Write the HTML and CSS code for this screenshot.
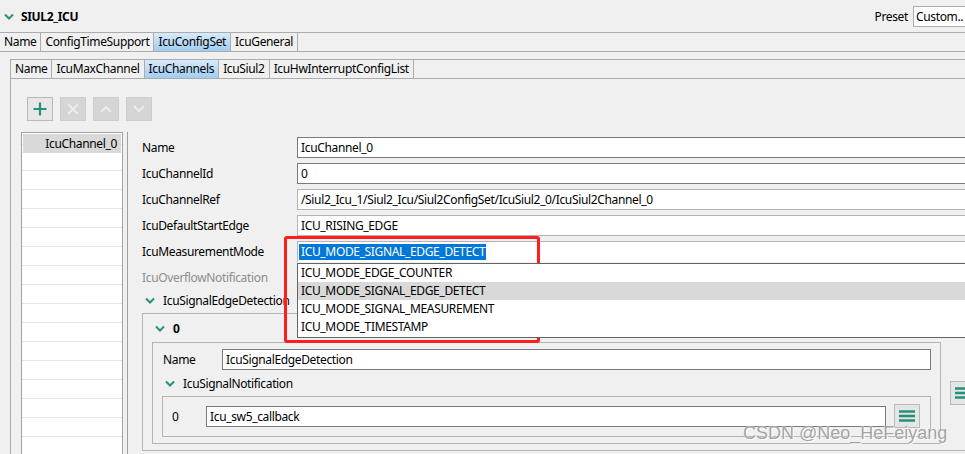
FILE: index.html
```html
<!DOCTYPE html>
<html>
<head>
<meta charset="utf-8">
<link rel="stylesheet" href="styles.css">
</head>
<body>
<div class="app">
  <div class="topbar">
    <svg class="chev" width="10" height="7" viewBox="0 0 10 7"><polyline points="1,1.5 5,5.5 9,1.5"/></svg>
    <span class="title">SIUL2_ICU</span>
    <span class="spacer"></span>
    <span class="preset-label">Preset</span>
    <span class="preset-box">Custom..</span>
  </div>
  <div class="wide">
    <div class="tabbar tabbar1">
      <span class="tab">Name</span><span class="tab">ConfigTimeSupport</span><span class="tab active">IcuConfigSet</span><span class="tab">IcuGeneral</span>
    </div>
    <div class="outer">
      <div class="panel">
        <div class="tabbar tabbar2">
          <span class="tab">Name</span><span class="tab">IcuMaxChannel</span><span class="tab active">IcuChannels</span><span class="tab">IcuSiul2</span><span class="tab">IcuHwInterruptConfigList</span>
        </div>
        <div class="content">
          <div class="toolbar">
            <span class="tbtn enabled"><svg width="14" height="14" viewBox="0 0 14 14"><path d="M7 0.5V13.5M0.5 7H13.5"/></svg></span>
            <span class="tbtn"><svg width="12" height="12" viewBox="0 0 12 12"><path d="M1 1L11 11M11 1L1 11"/></svg></span>
            <span class="tbtn"><svg width="12" height="8" viewBox="0 0 12 8"><polyline points="1,7 6,2 11,7"/></svg></span>
            <span class="tbtn"><svg width="12" height="8" viewBox="0 0 12 8"><polyline points="1,1 6,6 11,1"/></svg></span>
          </div>
          <div class="main">
            <div class="list">
              <div class="item sel">IcuChannel_0</div>
            </div>
            <div class="vsep"></div>
            <div class="details">
              <div class="form">
                <span class="lbl">Name</span><div class="field dark">IcuChannel_0</div>
                <span class="lbl">IcuChannelId</span><div class="field dark">0</div>
                <span class="lbl">IcuChannelRef</span><div class="field light">/Siul2_Icu_1/Siul2_Icu/Siul2ConfigSet/IcuSiul2_0/IcuSiul2Channel_0</div>
                <span class="lbl">IcuDefaultStartEdge</span><div class="field light">ICU_RISING_EDGE</div>
                <span class="lbl">IcuMeasurementMode</span>
                <div class="combo">
                  <span class="seltext">ICU_MODE_SIGNAL_EDGE_DETECT</span>
                  <ul class="dropdown">
                    <li>ICU_MODE_EDGE_COUNTER</li>
                    <li class="hl">ICU_MODE_SIGNAL_EDGE_DETECT</li>
                    <li>ICU_MODE_SIGNAL_MEASUREMENT</li>
                    <li>ICU_MODE_TIMESTAMP</li>
                  </ul>
                </div>
                <span class="lbl dim">IcuOverflowNotification</span><div class="field light"></div>
              </div>
              <div class="sec-head head-top">
                <svg class="chev" width="10" height="7" viewBox="0 0 10 7"><polyline points="1,1.5 5,5.5 9,1.5"/></svg>
                <span>IcuSignalEdgeDetection</span>
              </div>
              <div class="group g1">
                <div class="sec-head head-0">
                  <svg class="chev" width="10" height="7" viewBox="0 0 10 7"><polyline points="1,1.5 5,5.5 9,1.5"/></svg>
                  <span class="bold">0</span>
                </div>
                <div class="g1-row">
                  <div class="group g2">
                    <div class="name-row">
                      <span class="lbl name-lbl">Name</span>
                      <div class="field dark grow">IcuSignalEdgeDetection</div>
                    </div>
                    <div class="sec-head head-notif">
                      <svg class="chev" width="10" height="7" viewBox="0 0 10 7"><polyline points="1,1.5 5,5.5 9,1.5"/></svg>
                      <span>IcuSignalNotification</span>
                    </div>
                    <div class="group g3">
                      <span class="idx">0</span>
                      <div class="field dark grow">Icu_sw5_callback</div>
                      <span class="menubtn"><svg width="16" height="12" viewBox="0 0 16 12"><path d="M0 1.5H16M0 6H16M0 10.5H16"/></svg></span>
                    </div>
                  </div>
                  <span class="menubtn side"><svg width="16" height="12" viewBox="0 0 16 12"><path d="M0 1.5H16M0 6H16M0 10.5H16"/></svg></span>
                </div>
              </div>
            </div>
          </div>
        </div>
      </div>
    </div>
  </div>
  <div class="annotation"></div>
  <div class="watermark">CSDN @Neo_HeFeiyang</div>
</div>
</body>
</html>
```
FILE: styles.css
```css
* { box-sizing: border-box; }
html, body { margin: 0; padding: 0; }
body {
  background: #f0f0f0;
  font-family: "Noto Sans", "Open Sans", sans-serif;
  font-size: 12px;
  letter-spacing: -0.35px;
  color: #000;
  overflow: hidden;
}
.app {
  position: relative;
  width: 965px;
  height: 454px;
  overflow: hidden;
  background: #f0f0f0;
}
.chev { display: block; flex: none; }
.chev polyline { fill: none; stroke: #25917d; stroke-width: 2; }

/* top bar */
.topbar {
  height: 32px;
  display: flex;
  align-items: center;
  padding-left: 4px;
}
.topbar .chev { margin-right: 7px; }
.title { font-weight: bold; }
.spacer { flex: 1; }
.preset-label { margin-right: 5px; }
.preset-box {
  width: 60px;
  height: 21px;
  flex: none;
  background: #fff;
  border: 1px solid #adadad;
  padding-left: 2px;
  line-height: 19px;
  margin-right: -8px;
  white-space: nowrap;
  overflow: hidden;
}

.wide { width: 1030px; }

/* tabs */
.tabbar {
  display: flex;
  height: 20px;
  border-top: 1px solid #acacac;
  border-bottom: 1px solid #acacac;
}
.tab {
  padding: 0 4px;
  border-right: 1px solid #acacac;
  line-height: 18px;
  white-space: nowrap;
}
.tab.active {
  background: linear-gradient(#d8eafa, #9fcdf2);
}

.outer { padding: 7px 0 0 10px; }
.panel {
  border-left: 1px solid #acacac;
  height: 400px;
}
.content { padding: 18px 0 0 10px; }

/* toolbar */
.toolbar { display: flex; gap: 7px; margin-left: 6px; }
.tbtn {
  width: 26px;
  height: 24px;
  display: flex;
  align-items: center;
  justify-content: center;
  background: #d5d5d5;
  border: 1px solid #cdcdcd;
}
.tbtn svg path, .tbtn svg polyline { fill: none; stroke: #ececec; stroke-width: 2; }
.tbtn.enabled { background: #e7e7e7; border-color: #b9b9b9; }
.tbtn.enabled svg path { stroke: #25917d; stroke-width: 2.2; }

/* main */
.main { display: flex; margin-top: 11px; height: 330px; }
.list {
  width: 102px;
  flex: none;
  border: 1px solid #a2a2a2;
  padding: 1px;
  background-color: #fff;
  background-image: repeating-linear-gradient(to bottom, transparent 0 18px, #e6e6e6 18px 19px);
  background-position: 0 20px;
  background-origin: border-box;
}
.item { height: 19px; line-height: 19px; text-align: right; padding-right: 4px; }
.item.sel { background: #d9d9d9; }
.vsep { width: 1px; flex: none; background: #a0a0a0; margin-left: 4px; }
.details { flex: 1; margin-left: 14px; padding-top: 5px; }

.form {
  display: grid;
  grid-template-columns: 155px 1fr;
  grid-auto-rows: 21px;
  row-gap: 5px;
  align-items: center;
}
.lbl { white-space: nowrap; }
.lbl.dim { color: #8e8e8e; }
.field {
  height: 21px;
  background: #fff;
  border: 1px solid #7a7a7a;
  padding-left: 3px;
  line-height: 19px;
  white-space: nowrap;
  overflow: hidden;
}
.field.light { border-color: #b4b4b4; }

.combo {
  position: relative;
  height: 21px;
  background: #fff;
  border: 1px solid #b4b4b4;
  border-bottom: none;
  padding: 1px 0 0 1px;
}
.seltext {
  display: inline-block;
  background: #0078d7;
  color: #fff;
  line-height: 16px;
  padding: 0 1px 0 2px;
}
.dropdown {
  position: absolute;
  z-index: 5;
  left: -1px;
  right: -1px;
  top: 21px;
  margin: 0;
  padding: 0;
  list-style: none;
  background: #fff;
  border: 1px solid #646464;
  height: 75px;
}
.dropdown li {
  height: 18px;
  line-height: 18px;
  padding-left: 3px;
  white-space: nowrap;
}
.dropdown li.hl { background: #d9d9d9; }

/* sections */
.sec-head { display: flex; align-items: center; padding-left: 3px; }
.sec-head .chev { margin-right: 8px; }
.head-top { height: 25px; }
.head-0 { height: 28px; }
.head-notif { height: 26px; }
.bold { font-weight: bold; }

.group { border: 1px solid #b4b4b4; }
.g1 { padding: 0 0 6px 9px; }
.g1-row { display: flex; align-items: center; }
.g2 { width: 789px; flex: none; padding: 0 9px 6px 9px; }
.name-row { display: flex; align-items: center; margin-top: 6px; }
.name-lbl { width: 59px; margin-left: 1px; flex: none; }
.grow { flex: 1; }
.g3 {
  display: flex;
  align-items: center;
  padding: 7px 10px 8px 9px;
  width: 769px;
}
.idx { width: 34px; flex: none; }
.menubtn {
  width: 26px;
  height: 24px;
  flex: none;
  display: flex;
  align-items: center;
  justify-content: center;
  background: #e5e5e5;
  border: 1px solid #b9b9b9;
  margin-left: 8px;
}
.menubtn.side { margin-left: 9px; }
.menubtn svg path { fill: none; stroke: #25917d; stroke-width: 2.4; }

/* overlays */
.annotation {
  position: absolute;
  left: 284px;
  top: 236px;
  width: 256px;
  height: 107px;
  border: 3px solid #ff1e1e;
  border-radius: 3px;
  pointer-events: none;
}
.watermark {
  position: absolute;
  left: 743px;
  top: 423px;
  font-family: "Liberation Sans", Arial, sans-serif;
  font-size: 18px;
  letter-spacing: 0;
  color: #a3a3a3;
  text-shadow: 0 0 1px #fff, 1px 1px 0 #fff;
  white-space: nowrap;
}
```
